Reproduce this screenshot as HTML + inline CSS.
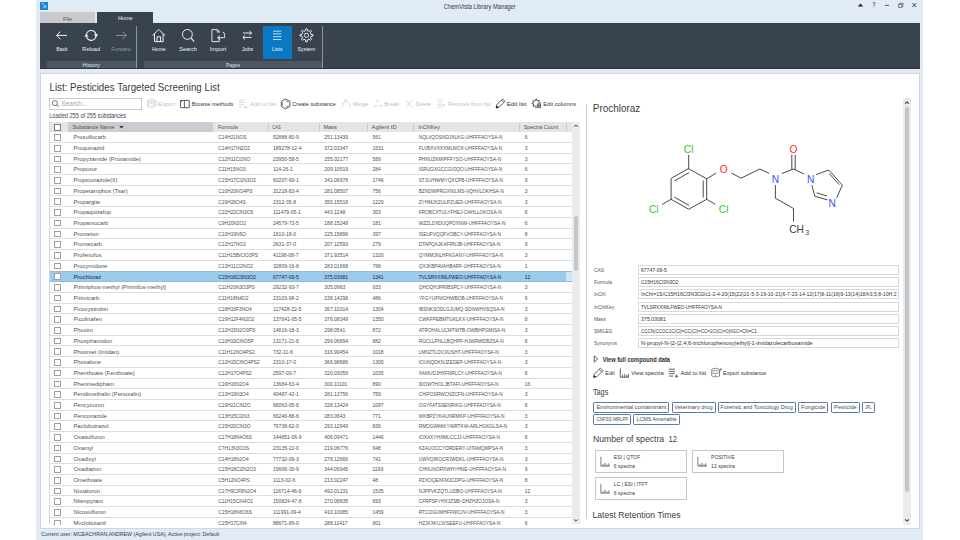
<!DOCTYPE html>
<html><head><meta charset="utf-8"><style>
html,body{margin:0;padding:0;}
body{width:960px;height:540px;position:relative;overflow:hidden;background:#fff;font-family:'Liberation Sans',sans-serif;}
body>div,body>svg{position:absolute;}
.ov{left:0;top:0;font-family:'Liberation Sans',sans-serif;}
</style></head><body>
<div style="left:36px;top:0px;width:887px;height:540px;background:#e0ebf5"></div>
<svg style="left:40px;top:2px" width="8" height="8" viewBox="0 0 8 8"><rect width="8" height="8" fill="#1b82d4"/><path d="M1.5 1.5 L3.5 1.5 L3.5 3 L5.5 4.2 M2.2 6.3 L4.2 5 L6.5 6" stroke="#8cc4ef" stroke-width="0.9" fill="none"/><circle cx="5.5" cy="4.2" r="0.9" fill="#b9dcf6"/></svg>
<svg class="ov" width="960" height="540" viewBox="0 0 960 540"><text x="443.75" y="9" font-size="6.60" fill="#3a3a3a" textLength="72.00" lengthAdjust="spacingAndGlyphs">ChemVista Library Manager</text></svg>
<svg style="left:855px;top:0px" width="65" height="12" viewBox="0 0 65 12"><path d="M2.8 6.4 L5.5 3.6 L8.2 6.4 Z" fill="#222"/><path d="M17.7 3.2 Q18.3 2.3 19.3 2.5 Q20.3 2.8 19.9 3.9 Q19.5 4.6 19 5.1 L19 6.1" stroke="#444" stroke-width="0.8" fill="none"/><circle cx="19" cy="7" r="0.45" fill="#444"/><path d="M30 5.4 H34" stroke="#444" stroke-width="0.9"/><path d="M43.6 4.4 h3.4 v3 h-3.4 z M44.6 4.4 v-1.1 h3.4 v3 h-1" stroke="#444" stroke-width="0.65" fill="none"/><path d="M57.4 3.2 L61.2 7 M61.2 3.2 L57.4 7" stroke="#333" stroke-width="0.95"/></svg>
<div style="left:40px;top:12px;width:55px;height:10.5px;background:#c8cacd"></div>
<svg class="ov" width="960" height="540" viewBox="0 0 960 540"><text x="62.90" y="21" font-size="5.60" fill="#555" textLength="9.40" lengthAdjust="spacingAndGlyphs">File</text></svg>
<div style="left:97px;top:12px;width:56px;height:11.5px;background:#38434e"></div>
<svg class="ov" width="960" height="540" viewBox="0 0 960 540"><text x="117.95" y="20" font-size="5.60" fill="#f2f4f6" textLength="14.50" lengthAdjust="spacingAndGlyphs">Home</text></svg>
<div style="left:40px;top:23px;width:880px;height:46px;background:#38434e"></div>
<div style="left:47px;top:61.3px;width:88.5px;height:6.7px;background:#4b5661"></div>
<div style="left:144px;top:61.3px;width:178px;height:6.7px;background:#4b5661"></div>
<div style="left:136px;top:26px;width:1px;height:43px;background:#8d959d"></div>
<div style="left:322px;top:26px;width:1px;height:43px;background:#8d959d"></div>
<div style="left:40px;top:68.2px;width:880px;height:0.9px;background:#2f3942"></div>
<svg class="ov" width="960" height="540" viewBox="0 0 960 540"><text x="82.45" y="67" font-size="5.50" fill="#dfe3e6" textLength="17.50" lengthAdjust="spacingAndGlyphs">History</text><text x="226.00" y="67" font-size="5.50" fill="#dfe3e6" textLength="14.00" lengthAdjust="spacingAndGlyphs">Pages</text></svg>
<div style="left:263px;top:25.9px;width:28.6px;height:32.8px;background:#0b78c4"></div>
<svg style="left:40px;top:23px" width="280" height="46" viewBox="40 23 280 46"><path d="M56.6 35.4 H67 M60.4 31.6 L56.6 35.4 L60.4 39.2" stroke="#f1f3f5" stroke-width="1" fill="none"/><path d="M86.4 36.2 A4.85 4.85 0 0 1 96 34.4 M96 34.6 A4.85 4.85 0 0 1 86.4 36.4" stroke="#f1f3f5" stroke-width="1.05" fill="none"/><path d="M93.9 34.2 L98.3 34.2 L96.1 37.3 Z M84.2 36.6 L88.6 36.6 L86.4 33.5 Z" fill="#f1f3f5"/><path d="M116 35.4 H126.3 M122.5 31.6 L126.3 35.4 L122.5 39.2" stroke="#8e979f" stroke-width="1" fill="none"/><path d="M152.6 35.6 L158.8 29.4 L165 35.6 M154.5 33.8 V41.6 H163.1 V33.8 M157 41.6 V36.8 H160.6 V41.6" stroke="#f1f3f5" stroke-width="1" fill="none"/><circle cx="187.4" cy="34.4" r="4.9" stroke="#f1f3f5" stroke-width="1" fill="none"/><path d="M190.9 37.9 L194.2 41.6" stroke="#f1f3f5" stroke-width="1.1"/><path d="M219.2 37.5 V41.6 H211.9 V29.6 H217.3 L219.8 32.1 M217.3 29.6 V32.1 H219.8" stroke="#f1f3f5" stroke-width="0.9" fill="none"/><path d="M222.8 32.3 Q224.6 32.3 224.6 34.5 V37.7 H217.8 M219.9 35.7 L217.6 37.7 L219.9 39.7" stroke="#f1f3f5" stroke-width="0.9" fill="none"/><path d="M242.9 33 H251.6 M249.4 30.9 L251.6 33 L249.4 35.1 M251.6 37.4 H242.9 M245.1 35.3 L242.9 37.4 L245.1 39.5" stroke="#f1f3f5" stroke-width="0.95" fill="none"/><path d="M273 31.2 H281.3 M273 33.9 H281.3 M273 36.7 H281.3 M273 39.5 H281.3" stroke="#f1f3f5" stroke-width="0.8"/><path d="M311.12 34.42 L312.95 34.54 L312.95 36.06 L311.12 36.18 L310.39 37.94 L311.60 39.32 L310.52 40.40 L309.14 39.19 L307.38 39.92 L307.26 41.75 L305.74 41.75 L305.62 39.92 L303.86 39.19 L302.48 40.40 L301.40 39.32 L302.61 37.94 L301.88 36.18 L300.05 36.06 L300.05 34.54 L301.88 34.42 L302.61 32.66 L301.40 31.28 L302.48 30.20 L303.86 31.41 L305.62 30.68 L305.74 28.85 L307.26 28.85 L307.38 30.68 L309.14 31.41 L310.52 30.20 L311.60 31.28 L310.39 32.66 Z" stroke="#f1f3f5" stroke-width="0.95" fill="none" stroke-linejoin="round"/><circle cx="306.5" cy="35.3" r="2.1" stroke="#f1f3f5" stroke-width="0.9" fill="none"/></svg>
<svg class="ov" width="960" height="540" viewBox="0 0 960 540"><text x="56.35" y="51" font-size="5.60" fill="#f1f3f5" textLength="11.30" lengthAdjust="spacingAndGlyphs">Back</text><text x="82.35" y="51" font-size="5.60" fill="#f1f3f5" textLength="17.70" lengthAdjust="spacingAndGlyphs">Reload</text><text x="111.15" y="51" font-size="5.60" fill="#8e979f" textLength="19.70" lengthAdjust="spacingAndGlyphs">Forward</text><text x="151.90" y="51" font-size="5.60" fill="#f1f3f5" textLength="13.60" lengthAdjust="spacingAndGlyphs">Home</text><text x="179.25" y="51" font-size="5.60" fill="#f1f3f5" textLength="17.50" lengthAdjust="spacingAndGlyphs">Search</text><text x="209.75" y="51" font-size="5.60" fill="#f1f3f5" textLength="16.50" lengthAdjust="spacingAndGlyphs">Import</text><text x="241.75" y="51" font-size="5.60" fill="#f1f3f5" textLength="11.50" lengthAdjust="spacingAndGlyphs">Jobs</text><text x="272.05" y="51" font-size="5.60" fill="#f1f3f5" textLength="10.50" lengthAdjust="spacingAndGlyphs">Lists</text><text x="297.55" y="51" font-size="5.60" fill="#f1f3f5" textLength="17.70" lengthAdjust="spacingAndGlyphs">System</text></svg>
<div style="left:40px;top:73px;width:880px;height:456px;background:#fff;border:1px solid #d3d7db;box-sizing:border-box"></div>
<svg class="ov" width="960" height="540" viewBox="0 0 960 540"><text x="49.50" y="91" font-size="10.60" fill="#3c3c3c" textLength="170.20" lengthAdjust="spacingAndGlyphs">List: Pesticides Targeted Screening List</text></svg>
<div style="left:49px;top:98px;width:92.5px;height:11.8px;border:1px solid #c9ccd1;box-sizing:border-box;background:#fff"></div>
<svg style="left:51px;top:99px" width="9" height="9" viewBox="0 0 9 9"><circle cx="3.9" cy="4.1" r="2.5" stroke="#555" stroke-width="0.8" fill="none"/><path d="M5.7 5.9 L7.6 7.8" stroke="#555" stroke-width="0.9"/></svg>
<svg class="ov" width="960" height="540" viewBox="0 0 960 540"><text x="61.50" y="106" font-size="6.60" fill="#a9a9a9" textLength="25.70" lengthAdjust="spacingAndGlyphs">Search...</text><text x="49.20" y="118" font-size="6.60" fill="#474747" textLength="76.80" lengthAdjust="spacingAndGlyphs">Loaded 255 of 255 substances</text></svg>
<svg style="left:140px;top:96px" width="450" height="16" viewBox="140 96 450 16"><g stroke="#c8c8c8" stroke-width="0.7" fill="none"><ellipse cx="151.2" cy="100.4" rx="3.7" ry="1.2"/><path d="M147.5 100.4 V107 Q151.2 108.7 154.9 107 V100.4 M147.5 102.6 Q151.2 104.3 154.9 102.6 M147.5 104.8 Q151.2 106.5 154.9 104.8"/><path d="M155.3 101.3 H156.8 V104.6 H155.2 M155.9 103.6 L156.8 104.6"/></g><g stroke="#333" stroke-width="0.8" fill="none"><rect x="180.5" y="100.4" width="8.8" height="7.3" rx="0.4"/><path d="M184.4 100.4 V107.7"/><path d="M180.6 102.2 L182.2 100.5"/></g><g stroke="#c8c8c8" stroke-width="0.7" fill="none"><path d="M238.8 100.2 H244.6 M238.8 102.5 H244.6 M238.8 104.8 H244.6 M238.8 107.2 H241.8 M244 107.2 H247.6 M245.8 105.4 V109"/></g><g stroke="#333" stroke-width="0.8" fill="none"><path d="M285.6 98.9 L289.9 101.4 V106.4 L285.6 108.9 L281.3 106.4 V101.4 Z"/><path d="M282.7 102.2 V105.6 M285.6 100.5 L288.5 102.2 M285.6 107.3 L288.5 105.6" stroke-width="0.6"/></g><g stroke="#c8c8c8" stroke-width="0.65" fill="none"><circle cx="345.6" cy="100.6" r="1"/><path d="M344.8 101.5 L341.6 107.6 M346.4 101.5 L349.6 104.6 M349.8 105.2 L350 107.6 M342.4 103.8 L343.6 103.2 M348.8 103.6 L349.9 104.6"/></g><g stroke="#c8c8c8" stroke-width="0.65" fill="none"><path d="M377.6 99.6 L377 103 M374.6 105 L376.6 107.4 M376.6 105 L374.6 107.4 M378.4 106.4 L381.6 105.3 M380.6 104.8 L381.6 105.3 L381 106.2"/></g><g stroke="#c8c8c8" stroke-width="0.7" fill="none"><path d="M405.6 100.3 L412 107.3 M412 100.3 L405.6 107.3"/></g><g stroke="#c8c8c8" stroke-width="0.65" fill="none"><path d="M437.2 100.2 H442.6 M437.2 102.5 H442.6 M437.2 104.8 H442.6 M437.2 107.2 H442.6 M443.2 104 L445 106.2 M445 104 L443.2 106.2"/></g><path d="M539.25 102.84 L540.57 102.89 L540.57 103.91 L539.25 103.96 L538.78 105.09 L539.68 106.06 L538.96 106.78 L537.99 105.88 L536.86 106.35 L536.81 107.67 L535.79 107.67 L535.74 106.35 L534.61 105.88 L533.64 106.78 L532.92 106.06 L533.82 105.09 L533.35 103.96 L532.03 103.91 L532.03 102.89 L533.35 102.84 L533.82 101.71 L532.92 100.74 L533.64 100.02 L534.61 100.92 L535.74 100.45 L535.79 99.13 L536.81 99.13 L536.86 100.45 L537.99 100.92 L538.96 100.02 L539.68 100.74 L538.78 101.71 Z" stroke="#333" stroke-width="0.8" fill="none" stroke-linejoin="round"/><rect x="536.6" y="103.2" width="4.4" height="4.8" fill="#fff"/><path d="M537.3 103.8 H540.5 V107.6 H537.3 Z M538.9 103.8 V107.6 M537.3 105.7 H540.5" stroke="#333" stroke-width="0.7" fill="none"/><g stroke="#333" stroke-width="0.8" fill="none"><path d="M496 108 L496.9 104.6 L502.6 98.9 L505 101.3 L499.3 107 Z M501.4 100.1 L503.8 102.5"/></g><path d="M495.9 108.2 L496.6 105.5 L498.6 107.5 Z" fill="#111"/></svg>
<svg class="ov" width="960" height="540" viewBox="0 0 960 540"><text x="158.60" y="106" font-size="6.20" fill="#bdbdbd" textLength="16.40" lengthAdjust="spacingAndGlyphs">Export</text><text x="191.80" y="106" font-size="6.20" fill="#333" textLength="41.50" lengthAdjust="spacingAndGlyphs">Browse methods</text><text x="250.00" y="106" font-size="6.20" fill="#bdbdbd" textLength="25.80" lengthAdjust="spacingAndGlyphs">Add to list</text><text x="292.30" y="106" font-size="6.20" fill="#333" textLength="43.40" lengthAdjust="spacingAndGlyphs">Create substance</text><text x="352.70" y="106" font-size="6.20" fill="#bdbdbd" textLength="15.30" lengthAdjust="spacingAndGlyphs">Merge</text><text x="384.30" y="106" font-size="6.20" fill="#bdbdbd" textLength="14.70" lengthAdjust="spacingAndGlyphs">Break</text><text x="416.00" y="106" font-size="6.20" fill="#bdbdbd" textLength="15.00" lengthAdjust="spacingAndGlyphs">Delete</text><text x="448.30" y="106" font-size="6.20" fill="#bdbdbd" textLength="42.70" lengthAdjust="spacingAndGlyphs">Remove from list</text><text x="506.70" y="106" font-size="6.20" fill="#333" textLength="20.00" lengthAdjust="spacingAndGlyphs">Edit list</text><text x="543.30" y="106" font-size="6.20" fill="#333" textLength="32.70" lengthAdjust="spacingAndGlyphs">Edit columns</text></svg>
<div style="left:49px;top:122.2px;width:522.7px;height:9.499999999999986px;background:#e3e5e8"></div>
<div style="left:67.5px;top:122.2px;width:145.5px;height:9.499999999999986px;background:#c9cdd1"></div>
<div style="left:267.7px;top:122.7px;width:0.8px;height:8.499999999999986px;background:#c6cacd"></div>
<div style="left:318.8px;top:122.7px;width:0.8px;height:8.499999999999986px;background:#c6cacd"></div>
<div style="left:366.7px;top:122.7px;width:0.8px;height:8.499999999999986px;background:#c6cacd"></div>
<div style="left:412.8px;top:122.7px;width:0.8px;height:8.499999999999986px;background:#c6cacd"></div>
<div style="left:519.2px;top:122.7px;width:0.8px;height:8.499999999999986px;background:#c6cacd"></div>
<div style="left:565.6px;top:122.7px;width:0.8px;height:8.499999999999986px;background:#c6cacd"></div>
<div style="left:54px;top:124.3px;width:7px;height:6.6px;border:0.9px solid #7a7a7a;box-sizing:border-box;background:#fff"></div>
<svg class="ov" width="960" height="540" viewBox="0 0 960 540"><text x="72.50" y="129.4" font-size="6.00" fill="#505050" textLength="41.70" lengthAdjust="spacingAndGlyphs">Substance Name</text></svg>
<svg style="left:119px;top:125px" width="6" height="5" viewBox="0 0 6 5"><path d="M0.3 0.9 H4.7 L2.5 3.6 Z" fill="#333"/></svg>
<svg class="ov" width="960" height="540" viewBox="0 0 960 540"><text x="217.90" y="129.4" font-size="6.00" fill="#505050" textLength="19.90" lengthAdjust="spacingAndGlyphs">Formula</text><text x="272.20" y="129.4" font-size="6.00" fill="#505050" textLength="8.50" lengthAdjust="spacingAndGlyphs">CAS</text><text x="323.40" y="129.4" font-size="6.00" fill="#505050" textLength="13.30" lengthAdjust="spacingAndGlyphs">Mass</text><text x="371.60" y="129.4" font-size="6.00" fill="#505050" textLength="25.00" lengthAdjust="spacingAndGlyphs">Agilent ID</text><text x="418.30" y="129.4" font-size="6.00" fill="#505050" textLength="21.50" lengthAdjust="spacingAndGlyphs">InChIKey</text><text x="523.75" y="129.4" font-size="6.00" fill="#505050" textLength="34.40" lengthAdjust="spacingAndGlyphs">Spectra Count</text></svg>
<div style="left:49px;top:141.91px;width:522.7px;height:0.8px;background:#dcdee0"></div>
<div style="left:49px;top:152.62px;width:522.7px;height:0.8px;background:#dcdee0"></div>
<div style="left:49px;top:163.33px;width:522.7px;height:0.8px;background:#dcdee0"></div>
<div style="left:49px;top:174.04px;width:522.7px;height:0.8px;background:#dcdee0"></div>
<div style="left:49px;top:184.75px;width:522.7px;height:0.8px;background:#dcdee0"></div>
<div style="left:49px;top:195.46px;width:522.7px;height:0.8px;background:#dcdee0"></div>
<div style="left:49px;top:206.17px;width:522.7px;height:0.8px;background:#dcdee0"></div>
<div style="left:49px;top:216.88px;width:522.7px;height:0.8px;background:#dcdee0"></div>
<div style="left:49px;top:227.59px;width:522.7px;height:0.8px;background:#dcdee0"></div>
<div style="left:49px;top:238.3px;width:522.7px;height:0.8px;background:#dcdee0"></div>
<div style="left:49px;top:249.01000000000002px;width:522.7px;height:0.8px;background:#dcdee0"></div>
<div style="left:49px;top:259.71999999999997px;width:522.7px;height:0.8px;background:#dcdee0"></div>
<div style="left:49px;top:270.93px;width:516.6px;height:10.71px;background:#99ccee"></div>
<div style="left:565.6px;top:270.93px;width:6.100000000000023px;height:10.71px;background:#cde5f6"></div>
<div style="left:49px;top:270.63px;width:522.7px;height:0.8px;background:#9fb9cc"></div>
<div style="left:49px;top:281.14px;width:522.7px;height:0.8px;background:#9fb9cc"></div>
<div style="left:49px;top:291.84999999999997px;width:522.7px;height:0.8px;background:#dcdee0"></div>
<div style="left:49px;top:302.56px;width:522.7px;height:0.8px;background:#dcdee0"></div>
<div style="left:49px;top:313.27px;width:522.7px;height:0.8px;background:#dcdee0"></div>
<div style="left:49px;top:323.97999999999996px;width:522.7px;height:0.8px;background:#dcdee0"></div>
<div style="left:49px;top:334.69px;width:522.7px;height:0.8px;background:#dcdee0"></div>
<div style="left:49px;top:345.4px;width:522.7px;height:0.8px;background:#dcdee0"></div>
<div style="left:49px;top:356.10999999999996px;width:522.7px;height:0.8px;background:#dcdee0"></div>
<div style="left:49px;top:366.82px;width:522.7px;height:0.8px;background:#dcdee0"></div>
<div style="left:49px;top:377.53px;width:522.7px;height:0.8px;background:#dcdee0"></div>
<div style="left:49px;top:388.23999999999995px;width:522.7px;height:0.8px;background:#dcdee0"></div>
<div style="left:49px;top:398.95px;width:522.7px;height:0.8px;background:#dcdee0"></div>
<div style="left:49px;top:409.65999999999997px;width:522.7px;height:0.8px;background:#dcdee0"></div>
<div style="left:49px;top:420.37px;width:522.7px;height:0.8px;background:#dcdee0"></div>
<div style="left:49px;top:431.08px;width:522.7px;height:0.8px;background:#dcdee0"></div>
<div style="left:49px;top:441.78999999999996px;width:522.7px;height:0.8px;background:#dcdee0"></div>
<div style="left:49px;top:452.5px;width:522.7px;height:0.8px;background:#dcdee0"></div>
<div style="left:49px;top:463.21px;width:522.7px;height:0.8px;background:#dcdee0"></div>
<div style="left:49px;top:473.92px;width:522.7px;height:0.8px;background:#dcdee0"></div>
<div style="left:49px;top:484.63px;width:522.7px;height:0.8px;background:#dcdee0"></div>
<div style="left:49px;top:495.34px;width:522.7px;height:0.8px;background:#dcdee0"></div>
<div style="left:49px;top:506.05px;width:522.7px;height:0.8px;background:#dcdee0"></div>
<div style="left:49px;top:516.76px;width:522.7px;height:0.8px;background:#dcdee0"></div>
<div style="left:49px;top:527.47px;width:522.7px;height:0.8px;background:#dcdee0"></div>
<div style="left:54px;top:134.2px;width:7px;height:6.6px;border:0.75px solid #a0a0a0;box-sizing:border-box;background:#fff"></div>
<svg class="ov" width="960" height="540" viewBox="0 0 960 540"><text x="73.50" y="139" font-size="6.20" fill="#505050" textLength="32.54" lengthAdjust="spacingAndGlyphs">Prosulfocarb</text><text x="218.30" y="139" font-size="6.20" fill="#505050" textLength="28.22" lengthAdjust="spacingAndGlyphs">C14H21NOS</text><text x="273.00" y="139" font-size="6.20" fill="#505050" textLength="25.85" lengthAdjust="spacingAndGlyphs">52888-80-9</text><text x="324.30" y="139" font-size="6.20" fill="#505050" textLength="23.74" lengthAdjust="spacingAndGlyphs">251.13439</text><text x="372.40" y="139" font-size="6.20" fill="#505050" textLength="8.38" lengthAdjust="spacingAndGlyphs">561</text><text x="418.70" y="139" font-size="6.20" fill="#505050" textLength="83.73" lengthAdjust="spacingAndGlyphs">NQLVQOSNDJXLKG-UHFFFAOYSA-N</text><text x="524.80" y="139" font-size="6.20" fill="#505050" textLength="2.79" lengthAdjust="spacingAndGlyphs">6</text></svg>
<div style="left:54px;top:144.91px;width:7px;height:6.6px;border:0.75px solid #a0a0a0;box-sizing:border-box;background:#fff"></div>
<svg class="ov" width="960" height="540" viewBox="0 0 960 540"><text x="73.50" y="150" font-size="6.20" fill="#505050" textLength="30.62" lengthAdjust="spacingAndGlyphs">Proquinazid</text><text x="218.30" y="150" font-size="6.20" fill="#505050" textLength="31.72" lengthAdjust="spacingAndGlyphs">C14H17IN2O2</text><text x="273.00" y="150" font-size="6.20" fill="#505050" textLength="28.66" lengthAdjust="spacingAndGlyphs">189278-12-4</text><text x="324.30" y="150" font-size="6.20" fill="#505050" textLength="23.74" lengthAdjust="spacingAndGlyphs">372.03347</text><text x="372.40" y="150" font-size="6.20" fill="#505050" textLength="11.17" lengthAdjust="spacingAndGlyphs">1631</text><text x="418.70" y="150" font-size="6.20" fill="#505050" textLength="83.47" lengthAdjust="spacingAndGlyphs">FLVBXVXXXMLMOX-UHFFFAOYSA-N</text><text x="524.80" y="150" font-size="6.20" fill="#505050" textLength="2.79" lengthAdjust="spacingAndGlyphs">3</text></svg>
<div style="left:54px;top:155.62px;width:7px;height:6.6px;border:0.75px solid #a0a0a0;box-sizing:border-box;background:#fff"></div>
<svg class="ov" width="960" height="540" viewBox="0 0 960 540"><text x="73.50" y="161" font-size="6.20" fill="#505050" textLength="67.34" lengthAdjust="spacingAndGlyphs">Propyzamide (Pronamide)</text><text x="218.30" y="161" font-size="6.20" fill="#505050" textLength="31.89" lengthAdjust="spacingAndGlyphs">C12H11Cl2NO</text><text x="273.00" y="161" font-size="6.20" fill="#505050" textLength="25.85" lengthAdjust="spacingAndGlyphs">23950-58-5</text><text x="324.30" y="161" font-size="6.20" fill="#505050" textLength="23.74" lengthAdjust="spacingAndGlyphs">255.02177</text><text x="372.40" y="161" font-size="6.20" fill="#505050" textLength="8.38" lengthAdjust="spacingAndGlyphs">589</text><text x="418.70" y="161" font-size="6.20" fill="#505050" textLength="82.49" lengthAdjust="spacingAndGlyphs">PHNUZKMIPFFYSO-UHFFFAOYSA-N</text><text x="524.80" y="161" font-size="6.20" fill="#505050" textLength="2.79" lengthAdjust="spacingAndGlyphs">3</text></svg>
<div style="left:54px;top:166.32999999999998px;width:7px;height:6.6px;border:0.75px solid #a0a0a0;box-sizing:border-box;background:#fff"></div>
<svg class="ov" width="960" height="540" viewBox="0 0 960 540"><text x="73.50" y="171" font-size="6.20" fill="#505050" textLength="23.52" lengthAdjust="spacingAndGlyphs">Propoxur</text><text x="218.30" y="171" font-size="6.20" fill="#505050" textLength="27.33" lengthAdjust="spacingAndGlyphs">C11H15NO3</text><text x="273.00" y="171" font-size="6.20" fill="#505050" textLength="19.85" lengthAdjust="spacingAndGlyphs">114-26-1</text><text x="324.30" y="171" font-size="6.20" fill="#505050" textLength="23.74" lengthAdjust="spacingAndGlyphs">209.10519</text><text x="372.40" y="171" font-size="6.20" fill="#505050" textLength="8.38" lengthAdjust="spacingAndGlyphs">284</text><text x="418.70" y="171" font-size="6.20" fill="#505050" textLength="83.55" lengthAdjust="spacingAndGlyphs">ISRUGXGCCGIOQO-UHFFFAOYSA-N</text><text x="524.80" y="171" font-size="6.20" fill="#505050" textLength="2.79" lengthAdjust="spacingAndGlyphs">6</text></svg>
<div style="left:54px;top:177.04px;width:7px;height:6.6px;border:0.75px solid #a0a0a0;box-sizing:border-box;background:#fff"></div>
<svg class="ov" width="960" height="540" viewBox="0 0 960 540"><text x="73.50" y="182" font-size="6.20" fill="#505050" textLength="43.82" lengthAdjust="spacingAndGlyphs">Propiconazole(II)</text><text x="218.30" y="182" font-size="6.20" fill="#505050" textLength="37.63" lengthAdjust="spacingAndGlyphs">C15H17Cl2N3O2</text><text x="273.00" y="182" font-size="6.20" fill="#505050" textLength="25.85" lengthAdjust="spacingAndGlyphs">60207-90-1</text><text x="324.30" y="182" font-size="6.20" fill="#505050" textLength="23.74" lengthAdjust="spacingAndGlyphs">341.06978</text><text x="372.40" y="182" font-size="6.20" fill="#505050" textLength="11.17" lengthAdjust="spacingAndGlyphs">1746</text><text x="418.70" y="182" font-size="6.20" fill="#505050" textLength="84.26" lengthAdjust="spacingAndGlyphs">STJLVHWMYQXCPB-UHFFFAOYSA-N</text><text x="524.80" y="182" font-size="6.20" fill="#505050" textLength="2.79" lengthAdjust="spacingAndGlyphs">9</text></svg>
<div style="left:54px;top:187.75px;width:7px;height:6.6px;border:0.75px solid #a0a0a0;box-sizing:border-box;background:#fff"></div>
<svg class="ov" width="960" height="540" viewBox="0 0 960 540"><text x="73.50" y="193" font-size="6.20" fill="#505050" textLength="54.13" lengthAdjust="spacingAndGlyphs">Propetamphos (Tsar)</text><text x="218.30" y="193" font-size="6.20" fill="#505050" textLength="34.14" lengthAdjust="spacingAndGlyphs">C10H20NO4PS</text><text x="273.00" y="193" font-size="6.20" fill="#505050" textLength="25.85" lengthAdjust="spacingAndGlyphs">31218-83-4</text><text x="324.30" y="193" font-size="6.20" fill="#505050" textLength="23.74" lengthAdjust="spacingAndGlyphs">281.08507</text><text x="372.40" y="193" font-size="6.20" fill="#505050" textLength="8.38" lengthAdjust="spacingAndGlyphs">756</text><text x="418.70" y="193" font-size="6.20" fill="#505050" textLength="85.15" lengthAdjust="spacingAndGlyphs">BZNDWPRGXNILMS-VQHVLOKHSA-N</text><text x="524.80" y="193" font-size="6.20" fill="#505050" textLength="2.79" lengthAdjust="spacingAndGlyphs">3</text></svg>
<div style="left:54px;top:198.45999999999998px;width:7px;height:6.6px;border:0.75px solid #a0a0a0;box-sizing:border-box;background:#fff"></div>
<svg class="ov" width="960" height="540" viewBox="0 0 960 540"><text x="73.50" y="204" font-size="6.20" fill="#505050" textLength="26.75" lengthAdjust="spacingAndGlyphs">Propargite</text><text x="218.30" y="204" font-size="6.20" fill="#505050" textLength="27.42" lengthAdjust="spacingAndGlyphs">C19H26O4S</text><text x="273.00" y="204" font-size="6.20" fill="#505050" textLength="23.04" lengthAdjust="spacingAndGlyphs">2312-35-8</text><text x="324.30" y="204" font-size="6.20" fill="#505050" textLength="23.74" lengthAdjust="spacingAndGlyphs">350.15518</text><text x="372.40" y="204" font-size="6.20" fill="#505050" textLength="11.17" lengthAdjust="spacingAndGlyphs">1229</text><text x="418.70" y="204" font-size="6.20" fill="#505050" textLength="82.75" lengthAdjust="spacingAndGlyphs">ZYHMJXZULPZUED-UHFFFAOYSA-N</text><text x="524.80" y="204" font-size="6.20" fill="#505050" textLength="2.79" lengthAdjust="spacingAndGlyphs">3</text></svg>
<div style="left:54px;top:209.17px;width:7px;height:6.6px;border:0.75px solid #a0a0a0;box-sizing:border-box;background:#fff"></div>
<svg class="ov" width="960" height="540" viewBox="0 0 960 540"><text x="73.50" y="214" font-size="6.20" fill="#505050" textLength="37.39" lengthAdjust="spacingAndGlyphs">Propaquizafop</text><text x="218.30" y="214" font-size="6.20" fill="#505050" textLength="34.94" lengthAdjust="spacingAndGlyphs">C22H22ClN3O5</text><text x="273.00" y="214" font-size="6.20" fill="#505050" textLength="27.91" lengthAdjust="spacingAndGlyphs">111479-05-1</text><text x="324.30" y="214" font-size="6.20" fill="#505050" textLength="20.95" lengthAdjust="spacingAndGlyphs">443.1248</text><text x="372.40" y="214" font-size="6.20" fill="#505050" textLength="8.38" lengthAdjust="spacingAndGlyphs">303</text><text x="418.70" y="214" font-size="6.20" fill="#505050" textLength="82.94" lengthAdjust="spacingAndGlyphs">FROBCXTULYFHEJ-OAHLLOKOSA-N</text><text x="524.80" y="214" font-size="6.20" fill="#505050" textLength="2.79" lengthAdjust="spacingAndGlyphs">6</text></svg>
<div style="left:54px;top:219.88px;width:7px;height:6.6px;border:0.75px solid #a0a0a0;box-sizing:border-box;background:#fff"></div>
<svg class="ov" width="960" height="540" viewBox="0 0 960 540"><text x="73.50" y="225" font-size="6.20" fill="#505050" textLength="34.80" lengthAdjust="spacingAndGlyphs">Propamocarb</text><text x="218.30" y="225" font-size="6.20" fill="#505050" textLength="27.69" lengthAdjust="spacingAndGlyphs">C9H20N2O2</text><text x="273.00" y="225" font-size="6.20" fill="#505050" textLength="25.85" lengthAdjust="spacingAndGlyphs">24579-73-5</text><text x="324.30" y="225" font-size="6.20" fill="#505050" textLength="23.74" lengthAdjust="spacingAndGlyphs">188.15248</text><text x="372.40" y="225" font-size="6.20" fill="#505050" textLength="8.38" lengthAdjust="spacingAndGlyphs">181</text><text x="418.70" y="225" font-size="6.20" fill="#505050" textLength="86.64" lengthAdjust="spacingAndGlyphs">WZZLDXDUQPOXNW-UHFFFAOYSA-N</text><text x="524.80" y="225" font-size="6.20" fill="#505050" textLength="2.79" lengthAdjust="spacingAndGlyphs">6</text></svg>
<div style="left:54px;top:230.59px;width:7px;height:6.6px;border:0.75px solid #a0a0a0;box-sizing:border-box;background:#fff"></div>
<svg class="ov" width="960" height="540" viewBox="0 0 960 540"><text x="73.50" y="236" font-size="6.20" fill="#505050" textLength="25.13" lengthAdjust="spacingAndGlyphs">Prometon</text><text x="218.30" y="236" font-size="6.20" fill="#505050" textLength="27.69" lengthAdjust="spacingAndGlyphs">C10H19N5O</text><text x="273.00" y="236" font-size="6.20" fill="#505050" textLength="23.04" lengthAdjust="spacingAndGlyphs">1610-18-0</text><text x="324.30" y="236" font-size="6.20" fill="#505050" textLength="23.74" lengthAdjust="spacingAndGlyphs">225.15896</text><text x="372.40" y="236" font-size="6.20" fill="#505050" textLength="8.38" lengthAdjust="spacingAndGlyphs">397</text><text x="418.70" y="236" font-size="6.20" fill="#505050" textLength="82.32" lengthAdjust="spacingAndGlyphs">ISEUFVQQFVOBCY-UHFFFAOYSA-N</text><text x="524.80" y="236" font-size="6.20" fill="#505050" textLength="2.79" lengthAdjust="spacingAndGlyphs">8</text></svg>
<div style="left:54px;top:241.3px;width:7px;height:6.6px;border:0.75px solid #a0a0a0;box-sizing:border-box;background:#fff"></div>
<svg class="ov" width="960" height="540" viewBox="0 0 960 540"><text x="73.50" y="246" font-size="6.20" fill="#505050" textLength="28.35" lengthAdjust="spacingAndGlyphs">Promecarb</text><text x="218.30" y="246" font-size="6.20" fill="#505050" textLength="27.69" lengthAdjust="spacingAndGlyphs">C12H17NO2</text><text x="273.00" y="246" font-size="6.20" fill="#505050" textLength="23.04" lengthAdjust="spacingAndGlyphs">2631-37-0</text><text x="324.30" y="246" font-size="6.20" fill="#505050" textLength="23.74" lengthAdjust="spacingAndGlyphs">207.12593</text><text x="372.40" y="246" font-size="6.20" fill="#505050" textLength="8.38" lengthAdjust="spacingAndGlyphs">279</text><text x="418.70" y="246" font-size="6.20" fill="#505050" textLength="81.87" lengthAdjust="spacingAndGlyphs">DTAPQAJKAFRNJB-UHFFFAOYSA-N</text><text x="524.80" y="246" font-size="6.20" fill="#505050" textLength="2.79" lengthAdjust="spacingAndGlyphs">9</text></svg>
<div style="left:54px;top:252.01px;width:7px;height:6.6px;border:0.75px solid #a0a0a0;box-sizing:border-box;background:#fff"></div>
<svg class="ov" width="960" height="540" viewBox="0 0 960 540"><text x="73.50" y="257" font-size="6.20" fill="#505050" textLength="28.04" lengthAdjust="spacingAndGlyphs">Profenofos</text><text x="218.30" y="257" font-size="6.20" fill="#505050" textLength="39.69" lengthAdjust="spacingAndGlyphs">C11H15BrClO3PS</text><text x="273.00" y="257" font-size="6.20" fill="#505050" textLength="25.47" lengthAdjust="spacingAndGlyphs">41198-08-7</text><text x="324.30" y="257" font-size="6.20" fill="#505050" textLength="23.74" lengthAdjust="spacingAndGlyphs">371.93514</text><text x="372.40" y="257" font-size="6.20" fill="#505050" textLength="11.17" lengthAdjust="spacingAndGlyphs">1320</text><text x="418.70" y="257" font-size="6.20" fill="#505050" textLength="84.44" lengthAdjust="spacingAndGlyphs">QYMMJNLHFKGANY-UHFFFAOYSA-N</text><text x="524.80" y="257" font-size="6.20" fill="#505050" textLength="2.79" lengthAdjust="spacingAndGlyphs">3</text></svg>
<div style="left:54px;top:262.72px;width:7px;height:6.6px;border:0.75px solid #a0a0a0;box-sizing:border-box;background:#fff"></div>
<svg class="ov" width="960" height="540" viewBox="0 0 960 540"><text x="73.50" y="268" font-size="6.20" fill="#505050" textLength="33.83" lengthAdjust="spacingAndGlyphs">Procymidone</text><text x="218.30" y="268" font-size="6.20" fill="#505050" textLength="34.58" lengthAdjust="spacingAndGlyphs">C13H11Cl2NO2</text><text x="273.00" y="268" font-size="6.20" fill="#505050" textLength="25.85" lengthAdjust="spacingAndGlyphs">32809-16-8</text><text x="324.30" y="268" font-size="6.20" fill="#505050" textLength="23.74" lengthAdjust="spacingAndGlyphs">283.01668</text><text x="372.40" y="268" font-size="6.20" fill="#505050" textLength="8.38" lengthAdjust="spacingAndGlyphs">768</text><text x="418.70" y="268" font-size="6.20" fill="#505050" textLength="81.97" lengthAdjust="spacingAndGlyphs">QXJKBPAVAHBARF-UHFFFAOYSA-N</text><text x="524.80" y="268" font-size="6.20" fill="#505050" textLength="2.79" lengthAdjust="spacingAndGlyphs">1</text></svg>
<div style="left:54px;top:273.43px;width:7px;height:6.6px;border:0.75px solid #a0a0a0;box-sizing:border-box;background:#fff"></div>
<svg class="ov" width="960" height="540" viewBox="0 0 960 540"><text x="73.50" y="279" font-size="6.20" fill="#1f1f1f" textLength="27.71" lengthAdjust="spacingAndGlyphs">Prochloraz</text><text x="218.30" y="279" font-size="6.20" fill="#1f1f1f" textLength="37.63" lengthAdjust="spacingAndGlyphs">C15H16Cl3N3O2</text><text x="273.00" y="279" font-size="6.20" fill="#1f1f1f" textLength="25.85" lengthAdjust="spacingAndGlyphs">67747-09-5</text><text x="324.30" y="279" font-size="6.20" fill="#1f1f1f" textLength="23.74" lengthAdjust="spacingAndGlyphs">375.03081</text><text x="372.40" y="279" font-size="6.20" fill="#1f1f1f" textLength="11.17" lengthAdjust="spacingAndGlyphs">1341</text><text x="418.70" y="279" font-size="6.20" fill="#1f1f1f" textLength="82.49" lengthAdjust="spacingAndGlyphs">TVLSRXXIMLFWEO-UHFFFAOYSA-N</text><text x="524.80" y="279" font-size="6.20" fill="#1f1f1f" textLength="5.59" lengthAdjust="spacingAndGlyphs">12</text></svg>
<div style="left:54px;top:284.14px;width:7px;height:6.6px;border:0.75px solid #a0a0a0;box-sizing:border-box;background:#fff"></div>
<svg class="ov" width="960" height="540" viewBox="0 0 960 540"><text x="73.50" y="289" font-size="6.20" fill="#505050" textLength="92.76" lengthAdjust="spacingAndGlyphs">Pirimiphos-methyl (Pirimifos-methyl)</text><text x="218.30" y="289" font-size="6.20" fill="#505050" textLength="36.47" lengthAdjust="spacingAndGlyphs">C11H20N3O3PS</text><text x="273.00" y="289" font-size="6.20" fill="#505050" textLength="25.85" lengthAdjust="spacingAndGlyphs">29232-93-7</text><text x="324.30" y="289" font-size="6.20" fill="#505050" textLength="20.95" lengthAdjust="spacingAndGlyphs">305.0963</text><text x="372.40" y="289" font-size="6.20" fill="#505050" textLength="8.38" lengthAdjust="spacingAndGlyphs">933</text><text x="418.70" y="289" font-size="6.20" fill="#505050" textLength="82.58" lengthAdjust="spacingAndGlyphs">QHOQHJPRIBSPCY-UHFFFAOYSA-N</text><text x="524.80" y="289" font-size="6.20" fill="#505050" textLength="2.79" lengthAdjust="spacingAndGlyphs">3</text></svg>
<div style="left:54px;top:294.85px;width:7px;height:6.6px;border:0.75px solid #a0a0a0;box-sizing:border-box;background:#fff"></div>
<svg class="ov" width="960" height="540" viewBox="0 0 960 540"><text x="73.50" y="300" font-size="6.20" fill="#505050" textLength="25.77" lengthAdjust="spacingAndGlyphs">Pirimicarb</text><text x="218.30" y="300" font-size="6.20" fill="#505050" textLength="30.02" lengthAdjust="spacingAndGlyphs">C11H18N4O2</text><text x="273.00" y="300" font-size="6.20" fill="#505050" textLength="25.85" lengthAdjust="spacingAndGlyphs">23103-98-2</text><text x="324.30" y="300" font-size="6.20" fill="#505050" textLength="23.74" lengthAdjust="spacingAndGlyphs">238.14298</text><text x="372.40" y="300" font-size="6.20" fill="#505050" textLength="8.38" lengthAdjust="spacingAndGlyphs">486</text><text x="418.70" y="300" font-size="6.20" fill="#505050" textLength="84.34" lengthAdjust="spacingAndGlyphs">YFGYUFNIOHWBOB-UHFFFAOYSA-N</text><text x="524.80" y="300" font-size="6.20" fill="#505050" textLength="2.79" lengthAdjust="spacingAndGlyphs">6</text></svg>
<div style="left:54px;top:305.56px;width:7px;height:6.6px;border:0.75px solid #a0a0a0;box-sizing:border-box;background:#fff"></div>
<svg class="ov" width="960" height="540" viewBox="0 0 960 540"><text x="73.50" y="311" font-size="6.20" fill="#505050" textLength="34.47" lengthAdjust="spacingAndGlyphs">Picoxystrobin</text><text x="218.30" y="311" font-size="6.20" fill="#505050" textLength="33.33" lengthAdjust="spacingAndGlyphs">C18H16F3NO4</text><text x="273.00" y="311" font-size="6.20" fill="#505050" textLength="28.28" lengthAdjust="spacingAndGlyphs">117428-22-5</text><text x="324.30" y="311" font-size="6.20" fill="#505050" textLength="23.74" lengthAdjust="spacingAndGlyphs">367.10314</text><text x="372.40" y="311" font-size="6.20" fill="#505050" textLength="11.17" lengthAdjust="spacingAndGlyphs">1304</text><text x="418.70" y="311" font-size="6.20" fill="#505050" textLength="85.68" lengthAdjust="spacingAndGlyphs">IBSNKSODLGJUMQ-SDNWHVSQSA-N</text><text x="524.80" y="311" font-size="6.20" fill="#505050" textLength="2.79" lengthAdjust="spacingAndGlyphs">3</text></svg>
<div style="left:54px;top:316.27px;width:7px;height:6.6px;border:0.75px solid #a0a0a0;box-sizing:border-box;background:#fff"></div>
<svg class="ov" width="960" height="540" viewBox="0 0 960 540"><text x="73.50" y="321" font-size="6.20" fill="#505050" textLength="28.36" lengthAdjust="spacingAndGlyphs">Picolinafen</text><text x="218.30" y="321" font-size="6.20" fill="#505050" textLength="36.02" lengthAdjust="spacingAndGlyphs">C19H12F4N2O2</text><text x="273.00" y="321" font-size="6.20" fill="#505050" textLength="28.66" lengthAdjust="spacingAndGlyphs">137641-05-5</text><text x="324.30" y="321" font-size="6.20" fill="#505050" textLength="23.74" lengthAdjust="spacingAndGlyphs">376.08349</text><text x="372.40" y="321" font-size="6.20" fill="#505050" textLength="11.17" lengthAdjust="spacingAndGlyphs">1350</text><text x="418.70" y="321" font-size="6.20" fill="#505050" textLength="84.88" lengthAdjust="spacingAndGlyphs">CWKFPEBMTGKLKX-UHFFFAOYSA-N</text><text x="524.80" y="321" font-size="6.20" fill="#505050" textLength="2.79" lengthAdjust="spacingAndGlyphs">8</text></svg>
<div style="left:54px;top:326.98px;width:7px;height:6.6px;border:0.75px solid #a0a0a0;box-sizing:border-box;background:#fff"></div>
<svg class="ov" width="960" height="540" viewBox="0 0 960 540"><text x="73.50" y="332" font-size="6.20" fill="#505050" textLength="19.33" lengthAdjust="spacingAndGlyphs">Phoxim</text><text x="218.30" y="332" font-size="6.20" fill="#505050" textLength="36.83" lengthAdjust="spacingAndGlyphs">C12H15N2O3PS</text><text x="273.00" y="332" font-size="6.20" fill="#505050" textLength="25.85" lengthAdjust="spacingAndGlyphs">14816-18-3</text><text x="324.30" y="332" font-size="6.20" fill="#505050" textLength="20.95" lengthAdjust="spacingAndGlyphs">298.0541</text><text x="372.40" y="332" font-size="6.20" fill="#505050" textLength="8.38" lengthAdjust="spacingAndGlyphs">872</text><text x="418.70" y="332" font-size="6.20" fill="#505050" textLength="86.64" lengthAdjust="spacingAndGlyphs">ATROHALUCMTWTB-OWBHPGMISA-N</text><text x="524.80" y="332" font-size="6.20" fill="#505050" textLength="2.79" lengthAdjust="spacingAndGlyphs">3</text></svg>
<div style="left:54px;top:337.69px;width:7px;height:6.6px;border:0.75px solid #a0a0a0;box-sizing:border-box;background:#fff"></div>
<svg class="ov" width="960" height="540" viewBox="0 0 960 540"><text x="73.50" y="343" font-size="6.20" fill="#505050" textLength="38.67" lengthAdjust="spacingAndGlyphs">Phosphamidon</text><text x="218.30" y="343" font-size="6.20" fill="#505050" textLength="35.48" lengthAdjust="spacingAndGlyphs">C10H19ClNO5P</text><text x="273.00" y="343" font-size="6.20" fill="#505050" textLength="25.85" lengthAdjust="spacingAndGlyphs">13171-21-6</text><text x="324.30" y="343" font-size="6.20" fill="#505050" textLength="23.74" lengthAdjust="spacingAndGlyphs">299.06894</text><text x="372.40" y="343" font-size="6.20" fill="#505050" textLength="8.38" lengthAdjust="spacingAndGlyphs">882</text><text x="418.70" y="343" font-size="6.20" fill="#505050" textLength="85.06" lengthAdjust="spacingAndGlyphs">RGCLLPNLLBQHPF-HJWRWDBZSA-N</text><text x="524.80" y="343" font-size="6.20" fill="#505050" textLength="2.79" lengthAdjust="spacingAndGlyphs">6</text></svg>
<div style="left:54px;top:348.4px;width:7px;height:6.6px;border:0.75px solid #a0a0a0;box-sizing:border-box;background:#fff"></div>
<svg class="ov" width="960" height="540" viewBox="0 0 960 540"><text x="73.50" y="354" font-size="6.20" fill="#505050" textLength="45.75" lengthAdjust="spacingAndGlyphs">Phosmet (Imidan)</text><text x="218.30" y="354" font-size="6.20" fill="#505050" textLength="36.47" lengthAdjust="spacingAndGlyphs">C11H12NO4PS2</text><text x="273.00" y="354" font-size="6.20" fill="#505050" textLength="19.85" lengthAdjust="spacingAndGlyphs">732-11-6</text><text x="324.30" y="354" font-size="6.20" fill="#505050" textLength="23.74" lengthAdjust="spacingAndGlyphs">316.99454</text><text x="372.40" y="354" font-size="6.20" fill="#505050" textLength="11.17" lengthAdjust="spacingAndGlyphs">1018</text><text x="418.70" y="354" font-size="6.20" fill="#505050" textLength="80.10" lengthAdjust="spacingAndGlyphs">LMNZTLDVJIUSHT-UHFFFAOYSA-N</text><text x="524.80" y="354" font-size="6.20" fill="#505050" textLength="2.79" lengthAdjust="spacingAndGlyphs">3</text></svg>
<div style="left:54px;top:359.11px;width:7px;height:6.6px;border:0.75px solid #a0a0a0;box-sizing:border-box;background:#fff"></div>
<svg class="ov" width="960" height="540" viewBox="0 0 960 540"><text x="73.50" y="364" font-size="6.20" fill="#505050" textLength="27.40" lengthAdjust="spacingAndGlyphs">Phosalone</text><text x="218.30" y="364" font-size="6.20" fill="#505050" textLength="41.39" lengthAdjust="spacingAndGlyphs">C12H15ClNO4PS2</text><text x="273.00" y="364" font-size="6.20" fill="#505050" textLength="23.04" lengthAdjust="spacingAndGlyphs">2310-17-0</text><text x="324.30" y="364" font-size="6.20" fill="#505050" textLength="23.74" lengthAdjust="spacingAndGlyphs">366.98686</text><text x="372.40" y="364" font-size="6.20" fill="#505050" textLength="11.17" lengthAdjust="spacingAndGlyphs">1300</text><text x="418.70" y="364" font-size="6.20" fill="#505050" textLength="82.49" lengthAdjust="spacingAndGlyphs">IOUNQDKNJZEDEP-UHFFFAOYSA-N</text><text x="524.80" y="364" font-size="6.20" fill="#505050" textLength="2.79" lengthAdjust="spacingAndGlyphs">3</text></svg>
<div style="left:54px;top:369.82px;width:7px;height:6.6px;border:0.75px solid #a0a0a0;box-sizing:border-box;background:#fff"></div>
<svg class="ov" width="960" height="540" viewBox="0 0 960 540"><text x="73.50" y="375" font-size="6.20" fill="#505050" textLength="61.23" lengthAdjust="spacingAndGlyphs">Phenthoate (Fenthoate)</text><text x="218.30" y="375" font-size="6.20" fill="#505050" textLength="33.34" lengthAdjust="spacingAndGlyphs">C12H17O4PS2</text><text x="273.00" y="375" font-size="6.20" fill="#505050" textLength="23.04" lengthAdjust="spacingAndGlyphs">2597-03-7</text><text x="324.30" y="375" font-size="6.20" fill="#505050" textLength="23.74" lengthAdjust="spacingAndGlyphs">320.03059</text><text x="372.40" y="375" font-size="6.20" fill="#505050" textLength="11.17" lengthAdjust="spacingAndGlyphs">1035</text><text x="418.70" y="375" font-size="6.20" fill="#505050" textLength="83.38" lengthAdjust="spacingAndGlyphs">XAMUDJHXFNRLCY-UHFFFAOYSA-N</text><text x="524.80" y="375" font-size="6.20" fill="#505050" textLength="2.79" lengthAdjust="spacingAndGlyphs">6</text></svg>
<div style="left:54px;top:380.53px;width:7px;height:6.6px;border:0.75px solid #a0a0a0;box-sizing:border-box;background:#fff"></div>
<svg class="ov" width="960" height="540" viewBox="0 0 960 540"><text x="73.50" y="386" font-size="6.20" fill="#505050" textLength="40.61" lengthAdjust="spacingAndGlyphs">Phenmedipham</text><text x="218.30" y="386" font-size="6.20" fill="#505050" textLength="30.38" lengthAdjust="spacingAndGlyphs">C16H16N2O4</text><text x="273.00" y="386" font-size="6.20" fill="#505050" textLength="25.85" lengthAdjust="spacingAndGlyphs">13684-63-4</text><text x="324.30" y="386" font-size="6.20" fill="#505050" textLength="22.99" lengthAdjust="spacingAndGlyphs">300.11101</text><text x="372.40" y="386" font-size="6.20" fill="#505050" textLength="8.38" lengthAdjust="spacingAndGlyphs">890</text><text x="418.70" y="386" font-size="6.20" fill="#505050" textLength="79.74" lengthAdjust="spacingAndGlyphs">IDOWTHOLJBTAFI-UHFFFAOYSA-N</text><text x="524.80" y="386" font-size="6.20" fill="#505050" textLength="5.59" lengthAdjust="spacingAndGlyphs">16</text></svg>
<div style="left:54px;top:391.24px;width:7px;height:6.6px;border:0.75px solid #a0a0a0;box-sizing:border-box;background:#fff"></div>
<svg class="ov" width="960" height="540" viewBox="0 0 960 540"><text x="73.50" y="396" font-size="6.20" fill="#505050" textLength="67.67" lengthAdjust="spacingAndGlyphs">Pendimethalin (Penoxalin)</text><text x="218.30" y="396" font-size="6.20" fill="#505050" textLength="30.38" lengthAdjust="spacingAndGlyphs">C13H19N3O4</text><text x="273.00" y="396" font-size="6.20" fill="#505050" textLength="25.85" lengthAdjust="spacingAndGlyphs">40487-42-1</text><text x="324.30" y="396" font-size="6.20" fill="#505050" textLength="23.74" lengthAdjust="spacingAndGlyphs">281.13756</text><text x="372.40" y="396" font-size="6.20" fill="#505050" textLength="8.38" lengthAdjust="spacingAndGlyphs">759</text><text x="418.70" y="396" font-size="6.20" fill="#505050" textLength="83.98" lengthAdjust="spacingAndGlyphs">CHIFOSRWCNZCFN-UHFFFAOYSA-N</text><text x="524.80" y="396" font-size="6.20" fill="#505050" textLength="2.79" lengthAdjust="spacingAndGlyphs">3</text></svg>
<div style="left:54px;top:401.95px;width:7px;height:6.6px;border:0.75px solid #a0a0a0;box-sizing:border-box;background:#fff"></div>
<svg class="ov" width="960" height="540" viewBox="0 0 960 540"><text x="73.50" y="407" font-size="6.20" fill="#505050" textLength="30.61" lengthAdjust="spacingAndGlyphs">Pencycuron</text><text x="218.30" y="407" font-size="6.20" fill="#505050" textLength="32.25" lengthAdjust="spacingAndGlyphs">C19H21ClN2O</text><text x="273.00" y="407" font-size="6.20" fill="#505050" textLength="25.85" lengthAdjust="spacingAndGlyphs">66063-05-6</text><text x="324.30" y="407" font-size="6.20" fill="#505050" textLength="23.74" lengthAdjust="spacingAndGlyphs">328.13424</text><text x="372.40" y="407" font-size="6.20" fill="#505050" textLength="11.17" lengthAdjust="spacingAndGlyphs">1097</text><text x="418.70" y="407" font-size="6.20" fill="#505050" textLength="82.14" lengthAdjust="spacingAndGlyphs">OGYFATSSENRIKG-UHFFFAOYSA-N</text><text x="524.80" y="407" font-size="6.20" fill="#505050" textLength="2.79" lengthAdjust="spacingAndGlyphs">6</text></svg>
<div style="left:54px;top:412.66px;width:7px;height:6.6px;border:0.75px solid #a0a0a0;box-sizing:border-box;background:#fff"></div>
<svg class="ov" width="960" height="540" viewBox="0 0 960 540"><text x="73.50" y="418" font-size="6.20" fill="#505050" textLength="33.52" lengthAdjust="spacingAndGlyphs">Penconazole</text><text x="218.30" y="418" font-size="6.20" fill="#505050" textLength="31.18" lengthAdjust="spacingAndGlyphs">C13H15Cl2N3</text><text x="273.00" y="418" font-size="6.20" fill="#505050" textLength="25.85" lengthAdjust="spacingAndGlyphs">66246-88-6</text><text x="324.30" y="418" font-size="6.20" fill="#505050" textLength="20.95" lengthAdjust="spacingAndGlyphs">283.0643</text><text x="372.40" y="418" font-size="6.20" fill="#505050" textLength="8.38" lengthAdjust="spacingAndGlyphs">771</text><text x="418.70" y="418" font-size="6.20" fill="#505050" textLength="85.67" lengthAdjust="spacingAndGlyphs">WKBPZYKAUNRMKP-UHFFFAOYSA-N</text><text x="524.80" y="418" font-size="6.20" fill="#505050" textLength="2.79" lengthAdjust="spacingAndGlyphs">3</text></svg>
<div style="left:54px;top:423.37px;width:7px;height:6.6px;border:0.75px solid #a0a0a0;box-sizing:border-box;background:#fff"></div>
<svg class="ov" width="960" height="540" viewBox="0 0 960 540"><text x="73.50" y="428" font-size="6.20" fill="#505050" textLength="35.13" lengthAdjust="spacingAndGlyphs">Paclobutrazol</text><text x="218.30" y="428" font-size="6.20" fill="#505050" textLength="32.25" lengthAdjust="spacingAndGlyphs">C15H20ClN3O</text><text x="273.00" y="428" font-size="6.20" fill="#505050" textLength="25.85" lengthAdjust="spacingAndGlyphs">76738-62-0</text><text x="324.30" y="428" font-size="6.20" fill="#505050" textLength="23.74" lengthAdjust="spacingAndGlyphs">293.12949</text><text x="372.40" y="428" font-size="6.20" fill="#505050" textLength="8.38" lengthAdjust="spacingAndGlyphs">836</text><text x="418.70" y="428" font-size="6.20" fill="#505050" textLength="88.41" lengthAdjust="spacingAndGlyphs">RMOGWMIKYWRTKW-ARLHGKGLSA-N</text><text x="524.80" y="428" font-size="6.20" fill="#505050" textLength="2.79" lengthAdjust="spacingAndGlyphs">3</text></svg>
<div style="left:54px;top:434.08px;width:7px;height:6.6px;border:0.75px solid #a0a0a0;box-sizing:border-box;background:#fff"></div>
<svg class="ov" width="960" height="540" viewBox="0 0 960 540"><text x="73.50" y="439" font-size="6.20" fill="#505050" textLength="31.26" lengthAdjust="spacingAndGlyphs">Oxasulfuron</text><text x="218.30" y="439" font-size="6.20" fill="#505050" textLength="33.60" lengthAdjust="spacingAndGlyphs">C17H18N4O6S</text><text x="273.00" y="439" font-size="6.20" fill="#505050" textLength="28.66" lengthAdjust="spacingAndGlyphs">144651-06-9</text><text x="324.30" y="439" font-size="6.20" fill="#505050" textLength="23.74" lengthAdjust="spacingAndGlyphs">406.09471</text><text x="372.40" y="439" font-size="6.20" fill="#505050" textLength="11.17" lengthAdjust="spacingAndGlyphs">1446</text><text x="418.70" y="439" font-size="6.20" fill="#505050" textLength="81.17" lengthAdjust="spacingAndGlyphs">IOXAXYHXMLCCJJ-UHFFFAOYSA-N</text><text x="524.80" y="439" font-size="6.20" fill="#505050" textLength="2.79" lengthAdjust="spacingAndGlyphs">6</text></svg>
<div style="left:54px;top:444.79px;width:7px;height:6.6px;border:0.75px solid #a0a0a0;box-sizing:border-box;background:#fff"></div>
<svg class="ov" width="960" height="540" viewBox="0 0 960 540"><text x="73.50" y="450" font-size="6.20" fill="#505050" textLength="19.65" lengthAdjust="spacingAndGlyphs">Oxamyl</text><text x="218.30" y="450" font-size="6.20" fill="#505050" textLength="30.91" lengthAdjust="spacingAndGlyphs">C7H13N3O3S</text><text x="273.00" y="450" font-size="6.20" fill="#505050" textLength="25.85" lengthAdjust="spacingAndGlyphs">23135-22-0</text><text x="324.30" y="450" font-size="6.20" fill="#505050" textLength="23.74" lengthAdjust="spacingAndGlyphs">219.06776</text><text x="372.40" y="450" font-size="6.20" fill="#505050" textLength="8.38" lengthAdjust="spacingAndGlyphs">948</text><text x="418.70" y="450" font-size="6.20" fill="#505050" textLength="84.53" lengthAdjust="spacingAndGlyphs">KZAUOCCYDRDERY-UITAMQMPSA-N</text><text x="524.80" y="450" font-size="6.20" fill="#505050" textLength="2.79" lengthAdjust="spacingAndGlyphs">3</text></svg>
<div style="left:54px;top:455.5px;width:7px;height:6.6px;border:0.75px solid #a0a0a0;box-sizing:border-box;background:#fff"></div>
<svg class="ov" width="960" height="540" viewBox="0 0 960 540"><text x="73.50" y="461" font-size="6.20" fill="#505050" textLength="22.23" lengthAdjust="spacingAndGlyphs">Oxadixyl</text><text x="218.30" y="461" font-size="6.20" fill="#505050" textLength="30.38" lengthAdjust="spacingAndGlyphs">C14H18N2O4</text><text x="273.00" y="461" font-size="6.20" fill="#505050" textLength="25.85" lengthAdjust="spacingAndGlyphs">77732-09-3</text><text x="324.30" y="461" font-size="6.20" fill="#505050" textLength="23.74" lengthAdjust="spacingAndGlyphs">278.12666</text><text x="372.40" y="461" font-size="6.20" fill="#505050" textLength="8.38" lengthAdjust="spacingAndGlyphs">741</text><text x="418.70" y="461" font-size="6.20" fill="#505050" textLength="84.87" lengthAdjust="spacingAndGlyphs">UWVQIROCRJWDKL-UHFFFAOYSA-N</text><text x="524.80" y="461" font-size="6.20" fill="#505050" textLength="2.79" lengthAdjust="spacingAndGlyphs">3</text></svg>
<div style="left:54px;top:466.21000000000004px;width:7px;height:6.6px;border:0.75px solid #a0a0a0;box-sizing:border-box;background:#fff"></div>
<svg class="ov" width="960" height="540" viewBox="0 0 960 540"><text x="73.50" y="471" font-size="6.20" fill="#505050" textLength="27.71" lengthAdjust="spacingAndGlyphs">Oxadiazon</text><text x="218.30" y="471" font-size="6.20" fill="#505050" textLength="37.63" lengthAdjust="spacingAndGlyphs">C15H18Cl2N2O3</text><text x="273.00" y="471" font-size="6.20" fill="#505050" textLength="25.85" lengthAdjust="spacingAndGlyphs">19666-30-9</text><text x="324.30" y="471" font-size="6.20" fill="#505050" textLength="23.74" lengthAdjust="spacingAndGlyphs">344.06945</text><text x="372.40" y="471" font-size="6.20" fill="#505050" textLength="10.80" lengthAdjust="spacingAndGlyphs">1199</text><text x="418.70" y="471" font-size="6.20" fill="#505050" textLength="87.26" lengthAdjust="spacingAndGlyphs">CHNUNORXWHYHNE-UHFFFAOYSA-N</text><text x="524.80" y="471" font-size="6.20" fill="#505050" textLength="2.79" lengthAdjust="spacingAndGlyphs">9</text></svg>
<div style="left:54px;top:476.92px;width:7px;height:6.6px;border:0.75px solid #a0a0a0;box-sizing:border-box;background:#fff"></div>
<svg class="ov" width="960" height="540" viewBox="0 0 960 540"><text x="73.50" y="482" font-size="6.20" fill="#505050" textLength="28.68" lengthAdjust="spacingAndGlyphs">Omethoate</text><text x="218.30" y="482" font-size="6.20" fill="#505050" textLength="31.45" lengthAdjust="spacingAndGlyphs">C5H12NO4PS</text><text x="273.00" y="482" font-size="6.20" fill="#505050" textLength="22.29" lengthAdjust="spacingAndGlyphs">1113-02-6</text><text x="324.30" y="482" font-size="6.20" fill="#505050" textLength="23.74" lengthAdjust="spacingAndGlyphs">213.02247</text><text x="372.40" y="482" font-size="6.20" fill="#505050" textLength="5.59" lengthAdjust="spacingAndGlyphs">48</text><text x="418.70" y="482" font-size="6.20" fill="#505050" textLength="84.61" lengthAdjust="spacingAndGlyphs">PZXOQEXFMJCDPG-UHFFFAOYSA-N</text><text x="524.80" y="482" font-size="6.20" fill="#505050" textLength="2.79" lengthAdjust="spacingAndGlyphs">8</text></svg>
<div style="left:54px;top:487.63px;width:7px;height:6.6px;border:0.75px solid #a0a0a0;box-sizing:border-box;background:#fff"></div>
<svg class="ov" width="960" height="540" viewBox="0 0 960 540"><text x="73.50" y="493" font-size="6.20" fill="#505050" textLength="26.42" lengthAdjust="spacingAndGlyphs">Novaluron</text><text x="218.30" y="493" font-size="6.20" fill="#505050" textLength="37.90" lengthAdjust="spacingAndGlyphs">C17H9ClF8N2O4</text><text x="273.00" y="493" font-size="6.20" fill="#505050" textLength="28.28" lengthAdjust="spacingAndGlyphs">116714-46-6</text><text x="324.30" y="493" font-size="6.20" fill="#505050" textLength="23.74" lengthAdjust="spacingAndGlyphs">492.01231</text><text x="372.40" y="493" font-size="6.20" fill="#505050" textLength="11.17" lengthAdjust="spacingAndGlyphs">1535</text><text x="418.70" y="493" font-size="6.20" fill="#505050" textLength="83.02" lengthAdjust="spacingAndGlyphs">NJPPVKZQTLUDBO-UHFFFAOYSA-N</text><text x="524.80" y="493" font-size="6.20" fill="#505050" textLength="5.59" lengthAdjust="spacingAndGlyphs">12</text></svg>
<div style="left:54px;top:498.34000000000003px;width:7px;height:6.6px;border:0.75px solid #a0a0a0;box-sizing:border-box;background:#fff"></div>
<svg class="ov" width="960" height="540" viewBox="0 0 960 540"><text x="73.50" y="503" font-size="6.20" fill="#505050" textLength="29.64" lengthAdjust="spacingAndGlyphs">Nitenpyram</text><text x="218.30" y="503" font-size="6.20" fill="#505050" textLength="34.58" lengthAdjust="spacingAndGlyphs">C11H15ClN4O2</text><text x="273.00" y="503" font-size="6.20" fill="#505050" textLength="28.66" lengthAdjust="spacingAndGlyphs">150824-47-8</text><text x="324.30" y="503" font-size="6.20" fill="#505050" textLength="23.74" lengthAdjust="spacingAndGlyphs">270.08835</text><text x="372.40" y="503" font-size="6.20" fill="#505050" textLength="8.38" lengthAdjust="spacingAndGlyphs">693</text><text x="418.70" y="503" font-size="6.20" fill="#505050" textLength="80.89" lengthAdjust="spacingAndGlyphs">CFRPSFYHXJZSBI-DHZHZOJOSA-N</text><text x="524.80" y="503" font-size="6.20" fill="#505050" textLength="2.79" lengthAdjust="spacingAndGlyphs">3</text></svg>
<div style="left:54px;top:509.05px;width:7px;height:6.6px;border:0.75px solid #a0a0a0;box-sizing:border-box;background:#fff"></div>
<svg class="ov" width="960" height="540" viewBox="0 0 960 540"><text x="73.50" y="514" font-size="6.20" fill="#505050" textLength="32.22" lengthAdjust="spacingAndGlyphs">Nicosulfuron</text><text x="218.30" y="514" font-size="6.20" fill="#505050" textLength="33.60" lengthAdjust="spacingAndGlyphs">C15H18N6O6S</text><text x="273.00" y="514" font-size="6.20" fill="#505050" textLength="27.91" lengthAdjust="spacingAndGlyphs">111991-09-4</text><text x="324.30" y="514" font-size="6.20" fill="#505050" textLength="23.74" lengthAdjust="spacingAndGlyphs">410.10085</text><text x="372.40" y="514" font-size="6.20" fill="#505050" textLength="11.17" lengthAdjust="spacingAndGlyphs">1459</text><text x="418.70" y="514" font-size="6.20" fill="#505050" textLength="85.84" lengthAdjust="spacingAndGlyphs">RTCOGUMHFFWOJV-UHFFFAOYSA-N</text><text x="524.80" y="514" font-size="6.20" fill="#505050" textLength="2.79" lengthAdjust="spacingAndGlyphs">3</text></svg>
<div style="left:54px;top:519.76px;width:7px;height:6.6px;border:0.75px solid #a0a0a0;box-sizing:border-box;background:#fff"></div>
<svg class="ov" width="960" height="540" viewBox="0 0 960 540"><text x="73.50" y="525" font-size="6.20" fill="#505050" textLength="32.22" lengthAdjust="spacingAndGlyphs">Myclobutanil</text><text x="218.30" y="525" font-size="6.20" fill="#505050" textLength="28.49" lengthAdjust="spacingAndGlyphs">C15H17ClN4</text><text x="273.00" y="525" font-size="6.20" fill="#505050" textLength="25.85" lengthAdjust="spacingAndGlyphs">88671-89-0</text><text x="324.30" y="525" font-size="6.20" fill="#505050" textLength="23.37" lengthAdjust="spacingAndGlyphs">288.11417</text><text x="372.40" y="525" font-size="6.20" fill="#505050" textLength="8.38" lengthAdjust="spacingAndGlyphs">801</text><text x="418.70" y="525" font-size="6.20" fill="#505050" textLength="81.70" lengthAdjust="spacingAndGlyphs">HZJKXKUJVSEEFU-UHFFFAOYSA-N</text><text x="524.80" y="525" font-size="6.20" fill="#505050" textLength="2.79" lengthAdjust="spacingAndGlyphs">6</text></svg>
<div style="left:48.5px;top:122.2px;width:0.8px;height:402.3px;background:#d5d8db"></div>
<div style="left:41px;top:524.5px;width:545px;height:3.5px;background:#fff"></div>
<div style="left:571.9px;top:122.2px;width:8.1px;height:402.3px;background:#e9ecef"></div>
<div style="left:574px;top:216.3px;width:4.1px;height:54.5px;background:#c3c6c9;border-radius:2px"></div>
<svg style="left:572px;top:122px" width="8" height="8" viewBox="0 0 8 8"><path d="M2.2 4.8 L4 3 L5.8 4.8" stroke="#333" stroke-width="0.9" fill="none"/></svg>
<svg style="left:572px;top:516px" width="8" height="8" viewBox="0 0 8 8"><path d="M2.2 3.4 L4 5.2 L5.8 3.4" stroke="#333" stroke-width="0.9" fill="none"/></svg>
<svg class="ov" width="960" height="540" viewBox="0 0 960 540"><text x="41.20" y="536.4" font-size="6.20" fill="#3a3a3a" textLength="178.00" lengthAdjust="spacingAndGlyphs">Current user: MCEACHRAN,ANDREW (Agilent USA), Active project: Default</text></svg>
<div style="left:586px;top:104px;width:0.9px;height:415px;background:#c9cdd1"></div>
<svg class="ov" width="960" height="540" viewBox="0 0 960 540"><text x="592.80" y="112" font-size="10.40" fill="#3c3c3c" textLength="47.40" lengthAdjust="spacingAndGlyphs">Prochloraz</text></svg>
<div style="left:902.8px;top:97.8px;width:8.1px;height:427px;background:#e9ecef"></div>
<div style="left:904.7px;top:106.7px;width:4.4px;height:385px;background:#c3c6c9;border-radius:2.2px"></div>
<svg style="left:903px;top:99px" width="8" height="8" viewBox="0 0 8 8"><path d="M2.1 4.7 L4 3 L5.9 4.7" stroke="#3a3f45" stroke-width="1.1" fill="none"/></svg>
<svg style="left:903px;top:516px" width="8" height="8" viewBox="0 0 8 8"><path d="M2.1 3.4 L4 5.1 L5.9 3.4" stroke="#3a3f45" stroke-width="1.1" fill="none"/></svg>
<svg style="left:630px;top:135px" width="230" height="105" viewBox="630 135 230 105"><g stroke="#404040" stroke-width="0.95" fill="none" stroke-linecap="round"><path d="M688.7 168.8 L706.7 178.8 L706.7 199.3 L688.7 209.2 L671.1 199.3 L671.1 178.8 Z"/><path d="M674.6 180.8 L688.7 172.8 M703.2 180.9 L703.2 197.2 M674.6 197.3 L688.7 205.2"/><path d="M688.7 168.8 L688.7 155.2 M706.7 178.8 L715.6 173.4 M671.1 199.3 L662.4 204.3 M706.7 199.3 L714.9 204"/><path d="M731.8 173.2 L741 178.2 L759.8 169 L768.8 173.2"/><path d="M782.2 173.4 L793.5 169 L803.6 173.9 M791.8 169.4 L791.8 155.2 M795.2 169.4 L795.2 155.2"/><path d="M775.4 185.5 L775.4 198.2 L793.5 208.5 L793.5 221"/><path d="M816.4 174.5 L828.8 170 L842.4 185.1 L836.8 197.5 M827.2 199.8 L814.8 196.2 L812 185.5 M829.5 173.8 L839 184.4 M817 193 L826.6 195.9"/></g><g font-family="Liberation Sans" font-size="10.2" text-anchor="middle"><text x="688.6" y="152.5" fill="#2ec82e">Cl</text><text x="653.8" y="213" fill="#2ec82e">Cl</text><text x="723.6" y="213" fill="#2ec82e">Cl</text><text x="723.7" y="173" fill="#ff2a2a">O</text><text x="793.5" y="152.5" fill="#ff2a2a">O</text><text x="775.5" y="183" fill="#3a50f0">N</text><text x="810.6" y="183" fill="#3a50f0">N</text><text x="832.3" y="207" fill="#3a50f0">N</text><text x="796.6" y="232.5" fill="#404040">CH</text><text x="807.3" y="234.5" fill="#404040" font-size="7">3</text></g></svg>
<div style="left:638px;top:265px;width:260.5px;height:10px;border:0.8px solid #d6d9dc;box-sizing:border-box;background:#fff"></div>
<svg class="ov" width="960" height="540" viewBox="0 0 960 540"><text x="593.90" y="272" font-size="5.80" fill="#555" textLength="10.14" lengthAdjust="spacingAndGlyphs">CAS</text><text x="641.00" y="272" font-size="5.90" fill="#333" textLength="25.80" lengthAdjust="spacingAndGlyphs">67747-09-5</text></svg>
<div style="left:638px;top:277px;width:260.5px;height:10px;border:0.8px solid #d6d9dc;box-sizing:border-box;background:#fff"></div>
<svg class="ov" width="960" height="540" viewBox="0 0 960 540"><text x="593.90" y="284" font-size="5.80" fill="#555" textLength="18.08" lengthAdjust="spacingAndGlyphs">Formula</text><text x="641.00" y="284" font-size="5.90" fill="#333" textLength="37.50" lengthAdjust="spacingAndGlyphs">C15H16Cl3N3O2</text></svg>
<div style="left:638px;top:289px;width:260.5px;height:10px;border:0.8px solid #d6d9dc;box-sizing:border-box;background:#fff"></div>
<svg class="ov" width="960" height="540" viewBox="0 0 960 540"><text x="593.90" y="296" font-size="5.80" fill="#555" textLength="11.78" lengthAdjust="spacingAndGlyphs">InChI</text><text x="641.00" y="296" font-size="5.90" fill="#333" textLength="255.50" lengthAdjust="spacingAndGlyphs">InChI=1S/C15H16Cl3N3O2/c1-2-4-20(15(22)21-5-3-19-10-21)6-7-23-14-12(17)8-11(16)9-13(14)18/h3,5,8-10H,2</text></svg>
<div style="left:638px;top:302px;width:260.5px;height:10px;border:0.8px solid #d6d9dc;box-sizing:border-box;background:#fff"></div>
<svg class="ov" width="960" height="540" viewBox="0 0 960 540"><text x="593.90" y="309" font-size="5.80" fill="#555" textLength="20.28" lengthAdjust="spacingAndGlyphs">InChIKey</text><text x="641.00" y="309" font-size="5.90" fill="#333" textLength="81.00" lengthAdjust="spacingAndGlyphs">TVLSRXXIMLFWEO-UHFFFAOYSA-N</text></svg>
<div style="left:638px;top:314px;width:260.5px;height:10px;border:0.8px solid #d6d9dc;box-sizing:border-box;background:#fff"></div>
<svg class="ov" width="960" height="540" viewBox="0 0 960 540"><text x="593.90" y="321" font-size="5.80" fill="#555" textLength="11.78" lengthAdjust="spacingAndGlyphs">Mass</text><text x="641.00" y="321" font-size="5.90" fill="#333" textLength="25.00" lengthAdjust="spacingAndGlyphs">375.03081</text></svg>
<div style="left:638px;top:326px;width:260.5px;height:10px;border:0.8px solid #d6d9dc;box-sizing:border-box;background:#fff"></div>
<svg class="ov" width="960" height="540" viewBox="0 0 960 540"><text x="593.90" y="333" font-size="5.80" fill="#555" textLength="18.08" lengthAdjust="spacingAndGlyphs">SMILES</text><text x="641.00" y="333" font-size="5.90" fill="#333" textLength="115.80" lengthAdjust="spacingAndGlyphs">CCCN(CCOC1C(Cl)=CC(Cl)=CC=1Cl)C(=O)N1C=CN=C1</text></svg>
<div style="left:638px;top:338px;width:260.5px;height:10px;border:0.8px solid #d6d9dc;box-sizing:border-box;background:#fff"></div>
<svg class="ov" width="960" height="540" viewBox="0 0 960 540"><text x="593.90" y="345" font-size="5.80" fill="#555" textLength="23.02" lengthAdjust="spacingAndGlyphs">Synonyms</text><text x="641.00" y="345" font-size="5.90" fill="#333" textLength="171.70" lengthAdjust="spacingAndGlyphs">N-propyl-N-[2-(2,4,6-trichlorophenoxy)ethyl]-1-imidazolecarboxamide</text></svg>
<svg style="left:593px;top:355px" width="6" height="8" viewBox="0 0 6 8"><path d="M1.3 0.9 L4.8 4 L1.3 7.1 Z" stroke="#333" stroke-width="0.75" fill="none" stroke-linejoin="round"/></svg>
<svg class="ov" width="960" height="540" viewBox="0 0 960 540"><text x="602.70" y="362" font-size="6.40" fill="#2e2e2e" font-weight="700" textLength="67.30" lengthAdjust="spacingAndGlyphs">View full compound data</text></svg>
<svg style="left:590px;top:366px" width="140" height="13" viewBox="590 366 140 13"><g stroke="#333" stroke-width="0.75" fill="none"><path d="M593.6 377.4 L594.4 374.1 L600.4 368.1 L603 370.7 L597 376.7 Z M599.2 369.3 L601.8 371.9"/><path d="M620.3 368.3 V377.2 H628.9 M622.6 377.2 V374.6 M624.8 377.2 V373.8 M626.8 377.2 V375 M628.4 377.2 V373.9"/><path d="M668.8 369.2 H674.9 M668.8 371.4 H674.9 M668.8 373.7 H674.9 M668.8 376.1 H673.3 M674.9 376.2 H678.3 M676.6 374.5 V377.9"/></g><g stroke="#5a5a5a" stroke-width="0.65" fill="none"><ellipse cx="715.6" cy="369.6" rx="3.9" ry="1.3"/><path d="M711.7 369.6 V376.1 Q715.6 377.9 719.5 376.1 V369.6 M711.7 372.8 Q715.6 374.6 719.5 372.8 M715.6 374.6 V376.4"/><path d="M719.9 369.2 L721.4 368.6 L720.9 370.2 M721.2 368.8 L719.6 371.6"/></g><path d="M593.5 377.6 L594.1 375.2 L596 377.1 Z" fill="#111"/></svg>
<svg class="ov" width="960" height="540" viewBox="0 0 960 540"><text x="605.20" y="374.5" font-size="6.20" fill="#333" textLength="9.60" lengthAdjust="spacingAndGlyphs">Edit</text><text x="631.25" y="374.5" font-size="6.20" fill="#333" textLength="32.50" lengthAdjust="spacingAndGlyphs">View spectra</text><text x="680.40" y="374.5" font-size="6.20" fill="#333" textLength="25.85" lengthAdjust="spacingAndGlyphs">Add to list</text><text x="722.90" y="374.5" font-size="6.20" fill="#333" textLength="43.30" lengthAdjust="spacingAndGlyphs">Export substance</text><text x="592.90" y="395" font-size="8.70" fill="#3c3c3c" textLength="15.40" lengthAdjust="spacingAndGlyphs">Tags</text></svg>
<div style="left:593.3px;top:402px;width:76.10000000000002px;height:10.5px;border:1.4px solid #5a7d9e;box-sizing:border-box;border-radius:1.2px"></div>
<svg class="ov" width="960" height="540" viewBox="0 0 960 540"><text x="596.40" y="409" font-size="5.90" fill="#4a4a4a" textLength="69.90" lengthAdjust="spacingAndGlyphs">Environmental contaminant</text></svg>
<div style="left:671.5px;top:402px;width:44.10000000000002px;height:10.5px;border:1.4px solid #5a7d9e;box-sizing:border-box;border-radius:1.2px"></div>
<svg class="ov" width="960" height="540" viewBox="0 0 960 540"><text x="674.60" y="409" font-size="5.90" fill="#4a4a4a" textLength="37.90" lengthAdjust="spacingAndGlyphs">Veterinary drug</text></svg>
<div style="left:717.5px;top:402px;width:78.29999999999995px;height:10.5px;border:1.4px solid #5a7d9e;box-sizing:border-box;border-radius:1.2px"></div>
<svg class="ov" width="960" height="540" viewBox="0 0 960 540"><text x="720.60" y="409" font-size="5.90" fill="#4a4a4a" textLength="72.10" lengthAdjust="spacingAndGlyphs">Forensic and Toxicology Drug</text></svg>
<div style="left:797.9px;top:402px;width:30.600000000000023px;height:10.5px;border:1.4px solid #5a7d9e;box-sizing:border-box;border-radius:1.2px"></div>
<svg class="ov" width="960" height="540" viewBox="0 0 960 540"><text x="801.00" y="409" font-size="5.90" fill="#4a4a4a" textLength="24.40" lengthAdjust="spacingAndGlyphs">Fungicide</text></svg>
<div style="left:830.8px;top:402px;width:29.0px;height:10.5px;border:1.4px solid #5a7d9e;box-sizing:border-box;border-radius:1.2px"></div>
<svg class="ov" width="960" height="540" viewBox="0 0 960 540"><text x="833.90" y="409" font-size="5.90" fill="#4a4a4a" textLength="22.80" lengthAdjust="spacingAndGlyphs">Pesticide</text></svg>
<div style="left:861.9px;top:402px;width:12.700000000000045px;height:10.5px;border:1.4px solid #5a7d9e;box-sizing:border-box;border-radius:1.2px"></div>
<svg class="ov" width="960" height="540" viewBox="0 0 960 540"><text x="865.00" y="409" font-size="5.20" fill="#4a4a4a" textLength="6.50" lengthAdjust="spacingAndGlyphs">JPL</text></svg>
<div style="left:593.3px;top:414px;width:38.200000000000045px;height:10.5px;border:1.4px solid #5a7d9e;box-sizing:border-box;border-radius:1.2px"></div>
<svg class="ov" width="960" height="540" viewBox="0 0 960 540"><text x="596.40" y="421" font-size="5.90" fill="#4a4a4a" textLength="32.00" lengthAdjust="spacingAndGlyphs">CNFSS MRLPF</text></svg>
<div style="left:633.3px;top:414px;width:46.5px;height:10.5px;border:1.4px solid #5a7d9e;box-sizing:border-box;border-radius:1.2px"></div>
<svg class="ov" width="960" height="540" viewBox="0 0 960 540"><text x="636.40" y="421" font-size="5.90" fill="#4a4a4a" textLength="40.30" lengthAdjust="spacingAndGlyphs">LCMS Amenable</text><text x="592.90" y="442" font-size="9.20" fill="#3c3c3c" textLength="71.30" lengthAdjust="spacingAndGlyphs">Number of spectra</text><text x="668.50" y="442" font-size="9.20" fill="#3c3c3c" textLength="8.50" lengthAdjust="spacingAndGlyphs">12</text></svg>
<div style="left:594.5px;top:450px;width:92.2px;height:22.5px;border:0.8px solid #c5c8cb;box-sizing:border-box"></div>
<svg style="left:600.0px;top:455.5px" width="11" height="11" viewBox="0 0 11 11"><path d="M0.9 0.8 V10.1 H9.8 M3 10.1 V8 M5 10.1 V6.6 M7 10.1 V8.3 M8.8 10.1 V7.4" stroke="#444" stroke-width="0.7" fill="none"/></svg>
<svg class="ov" width="960" height="540" viewBox="0 0 960 540"><text x="613.80" y="459" font-size="6.00" fill="#3a3a3a" textLength="26.45" lengthAdjust="spacingAndGlyphs">ESI | QTOF</text><text x="613.80" y="468" font-size="6.00" fill="#3a3a3a" textLength="20.98" lengthAdjust="spacingAndGlyphs">6 spectra</text></svg>
<div style="left:691.75px;top:450px;width:92.2px;height:22.5px;border:0.8px solid #c5c8cb;box-sizing:border-box"></div>
<svg style="left:697.25px;top:455.5px" width="11" height="11" viewBox="0 0 11 11"><path d="M0.9 0.8 V10.1 H9.8 M3 10.1 V8 M5 10.1 V6.6 M7 10.1 V8.3 M8.8 10.1 V7.4" stroke="#444" stroke-width="0.7" fill="none"/></svg>
<svg class="ov" width="960" height="540" viewBox="0 0 960 540"><text x="711.05" y="459" font-size="6.00" fill="#3a3a3a" textLength="23.52" lengthAdjust="spacingAndGlyphs">POSITIVE</text><text x="711.05" y="468" font-size="6.00" fill="#3a3a3a" textLength="23.81" lengthAdjust="spacingAndGlyphs">12 spectra</text></svg>
<div style="left:594.5px;top:477px;width:92.2px;height:22.5px;border:0.8px solid #c5c8cb;box-sizing:border-box"></div>
<svg style="left:600.0px;top:482.5px" width="11" height="11" viewBox="0 0 11 11"><path d="M0.9 0.8 V10.1 H9.8 M3 10.1 V8 M5 10.1 V6.6 M7 10.1 V8.3 M8.8 10.1 V7.4" stroke="#444" stroke-width="0.7" fill="none"/></svg>
<svg class="ov" width="960" height="540" viewBox="0 0 960 540"><text x="613.80" y="486" font-size="6.00" fill="#3a3a3a" textLength="33.82" lengthAdjust="spacingAndGlyphs">LC | ESI | ITFT</text><text x="613.80" y="495" font-size="6.00" fill="#3a3a3a" textLength="20.98" lengthAdjust="spacingAndGlyphs">6 spectra</text><text x="592.50" y="518" font-size="9.20" fill="#3c3c3c" textLength="88.00" lengthAdjust="spacingAndGlyphs">Latest Retention Times</text></svg>
</body></html>
